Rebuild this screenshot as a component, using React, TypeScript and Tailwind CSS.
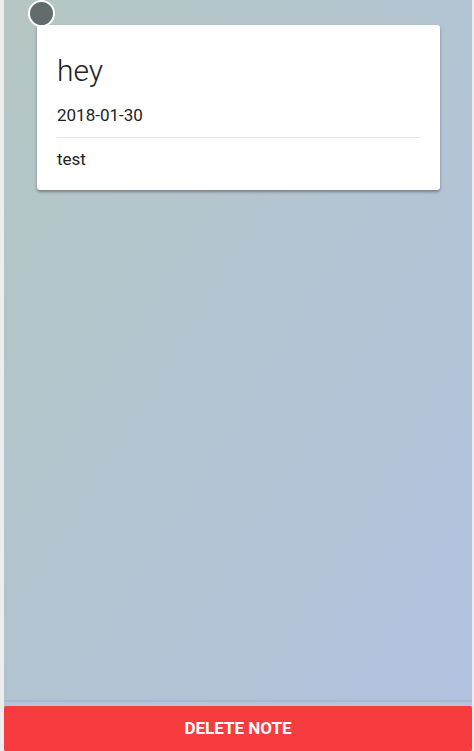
export default function App() {
  return (
    <div className="h-[751px] w-[474px] bg-[#ededed] pl-[4px] pr-[2px] font-['Roboto',sans-serif] overflow-hidden">
      <div className="flex h-full flex-col bg-gradient-to-br from-[#b5c6c3] to-[#b1c1e0]">
        <div className="relative flex-1 pt-[25px] pl-[33px] pr-[32px]">
          {/* Note card */}
          <div className="rounded-[3px] bg-white px-[20px] pt-[28px] pb-[19px] shadow-[0_2px_3px_rgba(0,0,0,0.35)]">
            <h1 className="text-[30px] font-light leading-[36px] text-[#222]">hey</h1>
            <p className="mt-[14px] text-[17px] leading-[24px] text-[#222]">2018-01-30</p>
            <div className="mt-[10px] border-t border-[#e8e8e8]" />
            <p className="mt-[9px] text-[17px] leading-[24px] text-[#222]">test</p>
          </div>
          <div className="absolute left-[24px] top-0 h-[27px] w-[27px] rounded-full border-[2px] border-white bg-[#626c6c]" />
        </div>
        <div className="h-[2px] bg-[#a9b8cc]" />
        <div className="h-[4px] bg-[#b6c4dc]" />
        <button className="h-[45px] w-full rounded-[2px] bg-[#f63c3e] text-[17px] font-bold text-white">
          DELETE NOTE
        </button>
      </div>
    </div>
  )
}
